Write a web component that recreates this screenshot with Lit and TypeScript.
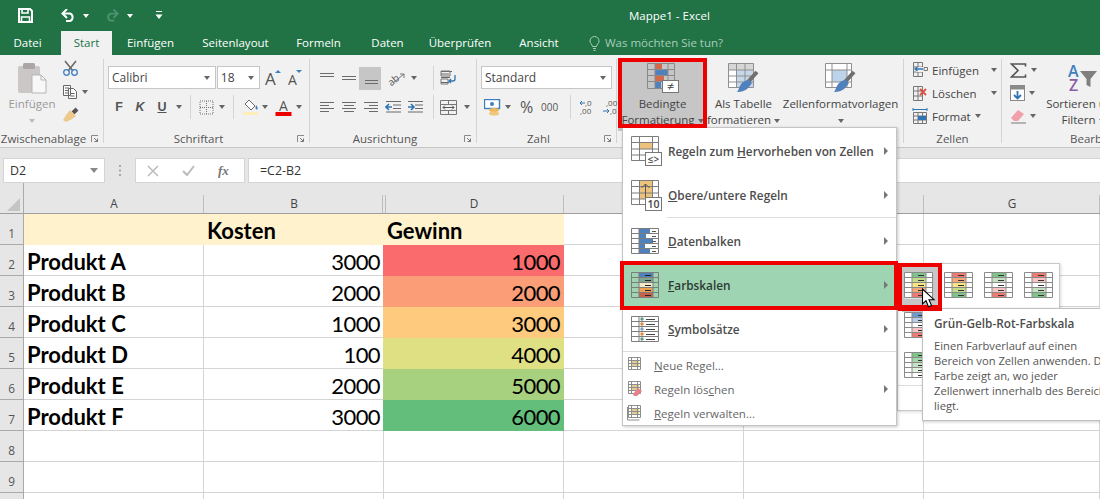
import { LitElement, html, css, svg } from "lit";
import { customElement } from "lit/decorators.js";

const GR = "#7d7d7d";
const gridD = (x: number, y: number, w: number, h: number, c: number[], r: number[]) =>
  `M${x} ${y}h${w}v${h}h${-w}z` + c.map((v) => `M${x + v} ${y}v${h}`).join("") + r.map((v) => `M${x} ${y + v}h${w}`).join("");
const grid = (x: number, y: number, w: number, h: number, c: number[], r: number[], s = GR) =>
  svg`<path d=${gridD(x, y, w, h, c, r)} fill="none" stroke=${s}/>`;
const box = (x: number, y: number, w: number, h: number, f: string) => svg`<rect x=${x} y=${y} width=${w} height=${h} fill=${f}/>`;
const line = (d: string, s = "#666", w = 1) => svg`<path d=${d} fill="none" stroke=${s} stroke-width=${w}/>`;

const scale = (cols: string[]) => html`<svg width="29" height="27" viewBox="0 0 29 27">
  ${box(0.5, 0.5, 28, 26, "#fff")}
  ${cols.map((c, i) => box(8, 1 + i * 5, 14, 5, c))}
  ${grid(0.5, 0.5, 28, 25, [7.5, 21.5], [5, 10, 15, 20], "#8a8a8a")}
  ${cols.map((_, i) => line(`M14 ${3.5 + i * 5}h6`, "#333"))}
</svg>`;

const iconRegeln = html`<svg width="31" height="30" viewBox="0 0 31 30">
  ${box(8, 6, 14, 7, "#edc27c")}
  ${grid(0.5, 0.5, 27, 24, [8, 21], [6, 12.5, 18.5])}
  ${box(14.5, 16.5, 16, 13, "#fff")}<rect x="14.5" y="16.5" width="16" height="13" fill="none" stroke="#777"/>
  <text x="22.5" y="26.5" text-anchor="middle" font-family="Open Sans" font-size="10" fill="#444">≤&gt;</text>
</svg>`;
const iconObere = html`<svg width="31" height="31" viewBox="0 0 31 31">
  ${box(9, 1, 13, 18, "#edc27c")}
  ${grid(0.5, 0.5, 27, 24, [8, 21], [6, 12.5, 18.5])}
  ${line("M14.5 17V4M10.5 8l4-4 4 4", "#555")}
  ${box(14.5, 17.5, 16, 13, "#fff")}<rect x="14.5" y="17.5" width="16" height="13" fill="none" stroke="#777"/>
  <text x="22.5" y="28" text-anchor="middle" font-family="Open Sans" font-size="10.5" fill="#444">10</text>
</svg>`;
const iconBalken = html`<svg width="29" height="27" viewBox="0 0 29 27">
  ${[11, 7, 14, 6, 11].map((w, i) => box(8, 1 + i * 5, w, 5, "#4f81bd"))}
  ${grid(0.5, 0.5, 27, 25, [7.5], [5, 10, 15, 20])}
  ${[0, 1, 2, 3, 4].map((i) => line(`M21 ${3.5 + i * 5}h4`, "#555"))}
</svg>`;
const iconSkalen = html`<svg width="29" height="27" viewBox="0 0 29 27">
  ${["#4f81bd", "#7fa692", "#f4e8c6", "#eda04f", "#c9604a"].map((c, i) => box(8, 1 + i * 5, 14, 5, c))}
  ${grid(0.5, 0.5, 27, 25, [7.5, 21.5], [5, 10, 15, 20])}
  ${[0, 1, 2, 3, 4].map((i) => line(`M14 ${3.5 + i * 5}h6`, "#222"))}
</svg>`;
const iconSymbol = html`<svg width="29" height="27" viewBox="0 0 29 27">
  ${grid(0.5, 0.5, 27, 25, [7.5], [5, 10, 15, 20])}
  ${["#5d9a8a", "#e28a3c", "#7fa0c0", "#e28a3c", "#5d9a8a"].map((c, i) => svg`<circle cx="11" cy=${3 + i * 5} r="1.7" fill=${c}/>`)}
  ${[0, 1, 2, 3, 4].map((i) => line(`M15 ${3.5 + i * 5}h9`, "#444"))}
</svg>`;
const smallGrid = (extra: unknown = null) => html`<svg width="16" height="16" viewBox="0 0 16 16">
  ${box(4, 3, 8, 6, "#e3cd8e")}
  ${grid(1.5, 0.5, 12, 12, [3, 9], [3, 6, 9], "#8d8d8d")}
  ${extra}
</svg>`;

const caret = html`<i class="caret"></i>`;
const launcher = html`<svg class="launch" width="8" height="8" viewBox="0 0 8 8">${line("M.5 7V.5H7", "#8a8a8a")}${line("M3 3l3.5 3.5M6.5 3.5v3h-3", "#777")}</svg>`;

const aLines = (ws: [number, number][], top: number, step: number) => html`<svg width="16" height="16" viewBox="0 0 16 16">
  ${ws.map((w, i) => line(`M${w[0]} ${top + i * step + 0.5}H${w[1]}`, "#6b6b6b"))}
</svg>`;
const indent = (dir: number) => html`<svg width="17" height="14" viewBox="0 0 17 14">
  ${[1, 4.5, 8, 11.5].map((y, i) => line(`M${i === 0 || i === 3 ? 1 : 8} ${y + 0.5}H16`, "#6b6b6b"))}
  ${line(dir < 0 ? "M7 7H1M4 4L1 7l3 3" : "M1 7H7M4 4l3 3-3 3", "#2f75b5", 1.6)}
</svg>`;
const brushOn = (body: unknown) => html`<svg width="32" height="30" viewBox="0 0 32 30">
  ${body}
  ${line("M20 19L29 9", "#6f6f6f", 4)}
  <path d="M21 17l3 3-3 4c-3 4-8 5-12 5 2-2 2-6 5-9 2-2 5-3 7-3z" fill="#4f81bd"/>
</svg>`;

const rows: [number, string, string, string, string][] = [
  [2, "Produkt A", "3000", "1000", "#f96b6c"],
  [3, "Produkt B", "2000", "2000", "#fb9d77"],
  [4, "Produkt C", "1000", "3000", "#fdca7e"],
  [5, "Produkt D", "100", "4000", "#dfe083"],
  [6, "Produkt E", "2000", "5000", "#a8d17f"],
  [7, "Produkt F", "3000", "6000", "#63be7b"],
];

@customElement("app-root")
export class AppRoot extends LitElement {
  static styles = css`
    :host { display: block; position: relative; width: 1100px; height: 499px; overflow: hidden; background: #fff;
      font-family: "Open Sans", "Noto Sans", sans-serif; font-size: 11.5px; color: #444; }
    svg { display: block; flex: none; }
    i.caret { display: inline-block; flex: none; width: 0; height: 0; border: 3.5px solid transparent; border-top: 4px solid #666; border-bottom: 0; vertical-align: middle; }
    .title { height: 31px; background: #217346; display: flex; align-items: center; color: #fff; }
    .qat { width: 629px; flex: none; display: grid; grid-template-columns: 18px 15px 28px 15px 7px 7px 15px 14px 8px 7px 21px 8px; align-items: center; justify-items: start; box-sizing: border-box; }
    .qat i.caret { border-top-color: #fff; }
    .qat .off { border-top-color: #5c9c7c; }
    .tabs { height: 24px; background: #217346; display: grid; grid-template-columns: 61px 51px 77px 93px 73px 65px 80px 78px 1fr; color: #fff; line-height: 24px; text-align: center; }
    .tab.first { padding-right: 6px; }
    .tab.on { background: #f1f1f1; color: #217346; }
    .tell { display: flex; align-items: center; gap: 5px; padding-left: 11px; color: #a9cdb9; }
    .ribbon { height: 93px; box-sizing: border-box; background: #f1f1f1; border-bottom: 1px solid #c6c6c6; display: flex; padding-top: 4px; }
    .g { flex: none; box-sizing: border-box; height: 84px; border-right: 1px solid #d4d4d4; }
    .body { height: 72px; display: flex; box-sizing: border-box; }
    .glabel { height: 16px; line-height: 16px; display: flex; align-items: center; color: #555; white-space: nowrap; }
    .glabel span { flex: 1; text-align: center; }
    .launch { margin: 0 4px 0 4px; }
    .big { display: flex; flex-direction: column; align-items: center; line-height: 16px; white-space: nowrap; flex: none; }
    .big .ic { height: 37px; display: flex; align-items: center; }
    .muted { color: #9a9a9a; }
    .muted i.caret { border-top-color: #bbb; }
    .small { display: flex; flex-direction: column; gap: 5.5px; }
    .srow { height: 18px; display: flex; align-items: center; gap: 4px; }

    .clip { width: 104px; }
    .clip .big { width: 62px; padding-left: 2px; box-sizing: border-box; }
    .font { width: 206px; }
    .stack { display: flex; flex-direction: column; padding: 7px 0 0 4px; gap: 6px; }
    .combos { display: flex; height: 23px; align-items: stretch; }
    .combo { box-sizing: border-box; height: 23px; background: #fff; border: 1px solid #c6c6c6; display: flex; align-items: center; justify-content: space-between; padding: 0 5px 0 3px; color: #444; font-size: 12px; }
    .combo.family { width: 110px; }
    .combo.size { width: 44px; margin-left: 1px; }
    .grow { width: 22px; margin-left: 5px; }
    .font-row { display: grid; height: 24px; align-items: center; grid-template-columns: 22px 20px 24px 10px 6px 1px 8px 15px 16px 3px 1px 9px 16px 12px 24px 8px; justify-items: center; }
    .f { font-weight: 700; font-size: 12.5px; color: #555; font-family: "Liberation Sans", sans-serif; }
    .vsep { width: 1px; height: 24px; background: #d4d4d4; }
    .align { width: 167px; }
    .al-row { display: grid; height: 23px; align-items: center; grid-template-columns: 22px 22px 22px 22px 22px 4px 1px 6px 20px 10px; justify-items: start; margin-left: 9px; }
    .al-row + .al-row { margin-top: 6px; height: 24px; }
    .al-row i.caret { margin-left: 4px; }
    .al-row > :nth-child(10) { margin-left: 0; }
    .hi { background: #c6c6c6; width: 22px; height: 23px; margin-left: -4px; display: flex; align-items: center; justify-content: center; }
    .al-stack { padding-top: 7px; }
    .zahl { width: 140px; }
    .zahl .combo { width: 131px; }
    .num-row { display: grid; height: 24px; align-items: center; grid-template-columns: 21px 15px 21px 21px 8px 1px 8px 23px 14px; justify-items: start; margin-left: 3px; }
    .pct { font-size: 16px; color: #555; }
    .th { font-size: 10px; color: #555; }
    .fmt { width: 287px; }
    .fmt .big:nth-child(1) { width: 89px; background: #c6c6c6; margin-left: 1px; }
    .fmt .big:nth-child(2) { width: 73px; }
    .fmt .big:nth-child(3) { width: 121px; }
    .cells { width: 98px; }
    .cells .small { padding-left: 8px; gap: 5px; margin-top: 2px; }
    .cells .srow { height: 18px; gap: 4px; }
    .ctext { width: 55px; }
    .edit { width: 110px; border-right: 0; }
    .edit .small { padding-left: 8px; width: 34px; gap: 5px; margin-top: 2px; flex: none; }
    .edit .big { width: 78px; margin-left: 0; }
    .edit .glabel { padding-left: 68px; }
    .band { height: 10px; background: #e6e6e6; }
    .fbar { height: 25px; background: #e6e6e6; display: flex; padding-left: 3px; color: #333; }
    .fbox { box-sizing: border-box; height: 25px; background: #fff; border: 1px solid #d4d4d4; display: flex; align-items: center; }
    .name { width: 102px; padding: 0 6px 0 6px; justify-content: space-between; font-size: 12.4px; }
    .name i.caret { border-width: 4px; border-top-width: 5px; border-bottom-width: 0; border-top-color: #888; }
    .dots { width: 30px; display: flex; align-items: center; justify-content: center; }
    .fx { width: 110px; padding: 0 12px 0 11px; justify-content: space-between; }
    .formula { flex: 1; margin-left: 3px; padding-left: 11px; font-size: 12.4px; border-right: 0; }
    .sheet { display: grid; grid-template-columns: 24px 180px 180px 180px 180px 180px 1fr; grid-auto-rows: 31px; }
    .hd { height: 31px; box-sizing: border-box; background-color: #e6e6e6; border-bottom: 1px solid #9e9e9e; color: #444; display: flex; align-items: flex-end; justify-content: center; padding-bottom: 1px; line-height: 18px; font-size: 11.8px;
      background-image: linear-gradient(#bdbdbd, #bdbdbd); background-repeat: no-repeat; background-position: right 0 bottom 0; background-size: 1px 18px; }
    .hd.corner { background-image: none; justify-content: flex-end; padding: 0 3px 2px 0; border-right: 1px solid #aaa; }
    .hd.b { background-position: right 1px bottom 0; }
    .hd.d { background-image: linear-gradient(#bdbdbd, #bdbdbd), linear-gradient(#bdbdbd, #bdbdbd); background-position: left 1px bottom 0, right 0 bottom 0; background-size: 1px 18px, 1px 18px; }
    .rh { box-sizing: border-box; background: #e6e6e6; border-right: 1px solid #aaa; border-bottom: 1px solid #aaa; display: flex; align-items: center; justify-content: center; padding-top: 7px; font-size: 11.8px; color: #555; }
    .c { box-sizing: border-box; border-right: 1px solid #d4d4d4; border-bottom: 1px solid #d4d4d4; font-family: Lato, "Liberation Sans", sans-serif; font-size: 22px; color: #000; line-height: 30px; padding: 2px 3px 0 3px; white-space: nowrap; }
    .c.bold { font-weight: 700; }
    .c.num { text-align: right; letter-spacing: -0.6px; }
    .c.y { background: #fff2cc; border-color: transparent; border-right: 0; border-bottom: 0; }
    .c.fill { margin-left: -1px; border: 0; padding-right: 4px; }
    .menu { position: absolute; left: 622px; top: 127px; box-sizing: border-box; width: 275px; height: 299px; background: #fff; border: 1px solid #c4c4c4; box-shadow: 1px 1px 3px rgba(0, 0, 0, .22); padding-top: 1px; color: #555; z-index: 3; font-size: 11.8px; }
    .mi { height: 44px; display: grid; grid-template-columns: 8px 37px 1fr 12px; align-items: center; font-weight: 600; color: #4d4d4d; }
    .mi > :first-child { grid-column: 2; }
    .mi.on { background: #9fd4b3; color: #2c3a33; }
    .arrow { width: 0; height: 0; border: 4px solid transparent; border-left: 4px solid #777; border-right: 0; }
    .sep { height: 1px; background: #dcdcdc; margin-bottom: 1px; }
    .sep.in { margin-left: 44px; }
    .ms { height: 24px; display: grid; grid-template-columns: 4px 27px 1fr 12px; align-items: center; color: #666; font-size: 11.5px; }
    .ms > :first-child { grid-column: 2; }
    .sub { position: absolute; left: 897px; top: 263px; box-sizing: border-box; width: 163px; height: 148px; background: #fff; border: 1px solid #c8c8c8; box-shadow: 1px 1px 3px rgba(0, 0, 0, .15); z-index: 2; }
    .sub .r { display: flex; gap: 11px; padding-left: 6px; height: 40px; padding-top: 8px; box-sizing: border-box; }
    .sub .sel { background: #c6c6c6; margin: -5px -6px -8px -2px; padding: 5px 6px 8px 2px; }
    .sub hr { border: 0; height: 1px; background: #dcdcdc; margin: 1px 0 0; }
    .ftip { position: absolute; left: 922px; top: 308px; box-sizing: border-box; width: 200px; height: 113px; background: #fff; border: 1px solid #c0c0c0; box-shadow: 1px 1px 3px rgba(0, 0, 0, .2); padding: 6px 0 0 11px; z-index: 4; line-height: 15px; color: #555; white-space: nowrap; font-size: 11.2px; }
    .ftip b { display: block; font-weight: 600; margin-bottom: 6px; line-height: 17px; color: #4d4d4d; font-size: 11.8px; }
    .mark { position: absolute; box-sizing: border-box; border: 4px solid #ee0000; z-index: 5; }
    .m1 { left: 618px; top: 58px; width: 89px; height: 70px; }
    .m2 { left: 620px; top: 261px; width: 278px; height: 49px; }
    .m3 { left: 898px; top: 263px; width: 44px; height: 48px; border-width: 4px 4px 6px 4px; }
    .cursor { position: absolute; left: 921px; top: 288px; z-index: 6; }
  `;

  render() {
    return html`
      <div class="title">
        <div class="qat">
          <span></span>
          <svg width="15" height="15" viewBox="0 0 15 15"><path d="M1 1h11l2 2v11H1z" fill="none" stroke="#fff" stroke-width="2"/><path d="M4 1v4h6V1M3.5 14V9h8v5" fill="none" stroke="#fff" stroke-width="1.6"/></svg>
          <span></span>
          <svg width="15" height="13" viewBox="0 0 15 13"><path d="M1.500 4.500H9a4 4 0 0 1 0 7.500H5" fill="none" stroke="#fff" stroke-width="2"/><path d="M6 0L1.500 4.500 6 9" fill="none" stroke="#fff" stroke-width="2"/></svg>
          <span></span>
          ${caret}
          <span></span>
          <svg width="14" height="13" viewBox="0 0 15 13"><path d="M13.500 4.500H6a4 4 0 0 0 0 7.500h4" fill="none" stroke="#4f9270" stroke-width="2"/><path d="M9 0l4.500 4.500L9 9" fill="none" stroke="#4f9270" stroke-width="2"/></svg>
          <span></span>
          <i class="caret off"></i>
          <span></span>
          <svg width="8" height="9" viewBox="0 0 8 9"><path d="M1 .5h6" stroke="#fff" fill="none"/><path d="M.5 3.500h7L4 8z" fill="#fff"/></svg>
        </div>
        <span>Mappe1 - Excel</span>
      </div>
      <div class="tabs">
        <div class="tab first">Datei</div><div class="tab on">Start</div><div class="tab">Einfügen</div><div class="tab">Seitenlayout</div><div class="tab">Formeln</div><div class="tab">Daten</div><div class="tab">Überprüfen</div><div class="tab">Ansicht</div>
        <div class="tell">
          <svg width="11" height="15" viewBox="0 0 11 15"><path d="M3.500 10.500C3 8 1 7.500 1 5a4.500 4.500 0 0 1 9 0c0 2.500-2 3-2.500 5.500zM4 12.500h3M4.500 14.500h2" fill="none" stroke="#a9cdb9"/></svg>
          <span>Was möchten Sie tun?</span>
        </div>
      </div>

      <div class="ribbon">
        <div class="g clip">
          <div class="body">
            <div class="big muted">
              <div class="ic"><svg width="31" height="32" viewBox="0 0 31 32"><rect x="1" y="4" width="22" height="27" rx="2" fill="#cbc7c7"/><rect x="6" y="1" width="12" height="6" rx="1.500" fill="#aaa6a6"/><path d="M15 13h9l5 5v13H15z" fill="#f8f8f8" stroke="#b5b5b5"/><path d="M24 13v5h5" fill="none" stroke="#b5b5b5"/></svg></div>
              <div>Einfügen</div>
              <div>${caret}</div>
            </div>
            <div class="small">
              <div class="srow"><svg width="17" height="16" viewBox="0 0 17 16"><path d="M3 1l8 10M14 1L6 11" stroke="#666" stroke-width="1.500" fill="none"/><circle cx="4.500" cy="12.500" r="2.800" fill="none" stroke="#3f7fbf" stroke-width="1.300"/><circle cx="12.500" cy="12.500" r="2.800" fill="none" stroke="#3f7fbf" stroke-width="1.300"/></svg></div>
              <div class="srow"><svg width="16" height="15" viewBox="0 0 16 15"><path d="M1.500 1.500h7v10h-7zM6.500 4.500h5l3 3v7h-8zM3 4h4M3 6.500h3M3 9h3M8.500 9.500h4M8.500 12h4" fill="#fbfbfb" stroke="#666"/></svg>${caret}</div>
              <div class="srow"><svg width="18" height="16" viewBox="0 0 18 16"><path d="M11 6l4-4" stroke="#555" stroke-width="4" fill="none"/><path d="M8 3l6 6-4 3-6 3-3-2 3-5z" fill="#ecc98c"/></svg></div>
            </div>
          </div>
          <div class="glabel"><span>Zwischenablage</span>${launcher}</div>
        </div>

        <div class="g font">
          <div class="body stack">
            <div class="combos">
              <div class="combo family"><span>Calibri</span>${caret}</div>
              <div class="combo size"><span>18</span>${caret}</div>
              <svg class="grow" width="22" height="23" viewBox="0 0 22 23"><text x="0" y="19" font-family="Open Sans" font-size="17" fill="#555">A</text><path d="M10 7l3-3 3 3z" fill="#3f7fbf"/></svg>
              <svg width="22" height="23" viewBox="0 0 22 23"><text x="1" y="19" font-family="Open Sans" font-size="14" fill="#555">A</text><path d="M9 4l3 3 3-3z" fill="#3f7fbf"/></svg>
            </div>
            <div class="font-row">
              <span class="f">F</span>
              <span class="f"><em>K</em></span>
              <span class="f"><u>U</u></span>
              ${caret}
              <span></span><span class="vsep"></span><span></span>
              <svg width="15" height="15" viewBox="0 0 15 15"><path d="M1 1h13v13H1zM7.500 1v13M1 7.500h13" fill="none" stroke="#777" stroke-dasharray="1 1"/></svg>
              ${caret}
              <span></span><span class="vsep"></span><span></span>
              <svg width="16" height="16" viewBox="0 0 16 16"><path d="M6 1l6 6-4 4-6-6z" fill="#fff" stroke="#666"/><path d="M13 6c1.500 2 2 3 1.500 4s-2 .5-2-1z" fill="#3f7fbf"/><rect x="0" y="13" width="15" height="3" fill="#fdeebc"/></svg>
              ${caret}
              <svg width="17" height="17" viewBox="0 0 17 17"><text x="8.500" y="12" text-anchor="middle" font-family="Open Sans" font-size="14" fill="#555">A</text><rect x="0.500" y="13" width="16" height="4" fill="#ee0000"/></svg>
              ${caret}
            </div>
          </div>
          <div class="glabel"><span>Schriftart</span>${launcher}</div>
        </div>

        <div class="g align">
          <div class="body">
            <div class="al-stack">
              <div class="al-row">
                ${aLines([[1, 15], [1, 15]], 3, 3)}
                ${aLines([[1, 15], [1, 15]], 6, 3)}
                <div class="hi">${aLines([[3, 16], [3, 16]], 10, 3)}</div>
                <svg width="22" height="16" viewBox="0 0 22 16"><text x="2" y="13" transform="rotate(-40 9 9)" font-family="Open Sans" font-size="10" fill="#555">ab</text><path d="M8 13l11-9M15 4h4v4" fill="none" stroke="#777"/></svg>
                ${caret}<span></span><span class="vsep"></span><span></span>
                <svg width="17" height="16" viewBox="0 0 17 16"><path d="M1 1.500h11M1 4h8M1 7.500h9M1 12.500h8" stroke="#666" fill="none"/><path d="M1 1h9v5H1zM1 9h7v5H1z" fill="none" stroke="#777"/><path d="M15 5v4a2 2 0 0 1-2 2H9M11 9l-2 2 2 2" fill="none" stroke="#2f75b5" stroke-width="1.300"/></svg>
              </div>
              <div class="al-row">
                ${aLines([[1, 15], [1, 10], [1, 15], [1, 10]], 3, 3)}
                ${aLines([[1, 15], [3, 13], [1, 15], [3, 13]], 3, 3)}
                ${aLines([[1, 15], [6, 15], [1, 15], [6, 15]], 3, 3)}
                ${indent(-1)}
                ${indent(1)}
                <span></span><span class="vsep"></span><span></span>
                <svg width="17" height="15" viewBox="0 0 17 15"><path d="M.5.500h16v14H.500zM.5 4.500h16M.5 10.500h16M8.500.5v4M8.500 10.500v4" fill="none" stroke="#777"/><path d="M3 7.500h11M5 5.500l-2 2 2 2M12 5.500l2 2-2 2" fill="none" stroke="#555"/></svg>
                ${caret}
              </div>
            </div>
          </div>
          <div class="glabel"><span>Ausrichtung</span>${launcher}</div>
        </div>

        <div class="g zahl">
          <div class="body stack">
            <div class="combo"><span>Standard</span>${caret}</div>
            <div class="num-row">
              <svg width="17" height="17" viewBox="0 0 17 17"><rect x="0.500" y="0.500" width="15" height="9" fill="#fff" stroke="#3f7fbf" stroke-width="1.400"/><circle cx="8" cy="5" r="2" fill="#3f7fbf"/><ellipse cx="10" cy="11" rx="5" ry="2" fill="#f0b85d"/><ellipse cx="10" cy="14.500" rx="5" ry="2" fill="#f0c67c"/></svg>
              ${caret}
              <span class="pct">%</span>
              <span class="th">000</span>
              <span></span><span class="vsep"></span><span></span>
              <svg width="16" height="16" viewBox="0 0 16 16"><text x="6" y="7" font-family="Open Sans" font-size="8" fill="#555">,0</text><text x="1" y="15" font-family="Open Sans" font-size="8" fill="#555">,00</text><path d="M6 4H1M3 2L1 4l2 2" stroke="#2f75b5" fill="none"/></svg>
              <svg width="16" height="16" viewBox="0 0 16 16"><text x="4" y="7" font-family="Open Sans" font-size="8" fill="#555">,00</text><text x="8" y="15" font-family="Open Sans" font-size="8" fill="#555">,0</text><path d="M1 12h6M5 10l2 2-2 2" stroke="#2f75b5" fill="none"/></svg>
            </div>
          </div>
          <div class="glabel"><span>Zahl</span>${launcher}</div>
        </div>

        <div class="g fmt">
          <div class="body">
            <div class="big">
              <div class="ic"><svg width="32" height="30" viewBox="0 0 32 30">
                ${box(8, 1, 7, 5, "#d1694a")}${box(8, 7, 13, 5, "#4f81bd")}${box(8, 13, 9, 5, "#d1694a")}${box(8, 19, 6, 6, "#4f81bd")}
                ${grid(0.5, 0.5, 27, 25, [7.5, 20.5], [6, 12, 18], "#8a8a8a")}
                ${box(15.5, 17.5, 16, 12, "#fff")}<rect x="15.500" y="17.500" width="16" height="12" fill="none" stroke="#777"/>
                <text x="23.500" y="28" text-anchor="middle" font-family="Open Sans" font-size="13" fill="#444">≠</text>
              </svg></div>
              <div>Bedingte</div>
              <div>Formatierung ${caret}</div>
            </div>
            <div class="big">
              <div class="ic">${brushOn(html`${box(1, 1, 24, 24, "#fff")}${box(1, 1, 24, 6, "#d6d6d6")}${box(8, 7, 17, 17, "#c7d7ea")}${grid(0.5, 0.5, 25, 24, [8, 16.500], [6.500, 12.500, 18.500], "#8f8f8f")}`)}</div>
              <div>Als Tabelle</div>
              <div>formatieren ${caret}</div>
            </div>
            <div class="big">
              <div class="ic">${brushOn(html`${box(1, 1, 26, 24, "#fff")}${box(7, 7, 15, 12, "#bcd3ea")}${grid(0.5, 0.5, 26, 24, [6.500, 21.500], [6.500, 18.500], "#8f8f8f")}`)}</div>
              <div>Zellenformatvorlagen</div>
              <div>${caret}</div>
            </div>
          </div>
          <div class="glabel"></div>
        </div>

        <div class="g cells">
          <div class="body">
            <div class="small">
              <div class="srow"><svg width="16" height="16" viewBox="0 0 16 16">${grid(1.500, 0.500, 9, 14, [4.500], [4.500, 9.500], "#777")}${box(4, 5, 12, 5, "#f1f1f1")}<path d="M12 5.500h3.500v3H12z" fill="none" stroke="#777"/><path d="M11 7H3M5.500 5L3 7l2.500 2" fill="none" stroke="#2f75b5" stroke-width="1.300"/></svg><span class="ctext">Einfügen</span>${caret}</div>
              <div class="srow"><svg width="16" height="16" viewBox="0 0 16 16">${grid(1.500, 1.500, 9, 14, [4.500], [4.500, 9.500], "#777")}<path d="M8 4l6 6M14 4l-6 6" stroke="#d9503f" stroke-width="1.800" fill="none"/></svg><span class="ctext">Löschen</span>${caret}</div>
              <div class="srow"><svg width="16" height="16" viewBox="0 0 16 16">${line("M1 1.500h14M1 0v3M15 0v3", "#2f75b5")}${grid(1.500, 4.500, 13, 11, [4.500, 9], [3.500, 7.500], "#777")}${box(6, 8, 8, 4, "#2f75b5")}</svg><span>Format</span>${caret}</div>
            </div>
          </div>
          <div class="glabel"><span>Zellen</span></div>
        </div>

        <div class="g edit">
          <div class="body">
            <div class="small">
              <div class="srow"><svg width="17" height="15" viewBox="0 0 17 15"><path d="M15.500 3.500V1H1.500l6.500 6.500L1.500 14h14v-2.500" fill="none" stroke="#555" stroke-width="1.600"/></svg>${caret}</div>
              <div class="srow"><svg width="15" height="16" viewBox="0 0 15 16"><rect x="0.500" y="0.500" width="14" height="15" fill="#fff" stroke="#888"/><rect x="0.500" y="0.500" width="14" height="4" fill="#8a8a8a"/><path d="M7.500 6v7M4 10l3.500 3.500L11 10" fill="none" stroke="#2f75b5" stroke-width="1.800"/></svg>${caret}</div>
              <div class="srow"><svg width="16" height="15" viewBox="0 0 16 15"><path d="M1 9l7-8 6 4-6 7H4z" fill="#f0a0a8"/>${line("M1 14h15", "#777")}</svg>${caret}</div>
            </div>
            <div class="big">
              <div class="ic"><svg width="30" height="30" viewBox="0 0 30 30"><text x="0" y="14" font-family="Open Sans" font-weight="600" font-size="16" fill="#3f7fbf">A</text><text x="1" y="28" font-family="Open Sans" font-weight="600" font-size="16" fill="#8b5ea8">Z</text><path d="M12 8h17l-6.500 8v8l-4-2v-6z" fill="#7f7f7f"/></svg></div>
              <div>Sortieren und</div>
              <div>Filtern ${caret}</div>
            </div>
          </div>
          <div class="glabel">Bearbeiten</div>
        </div>
      </div>

      <div class="band"></div>
      <div class="fbar">
        <div class="fbox name"><span>D2</span>${caret}</div>
        <div class="dots"><svg width="3" height="11" viewBox="0 0 3 11"><path d="M0 0h2v2H0zM0 4.500h2v2H0zM0 9h2v2H0z" fill="#a8a8a8"/></svg></div>
        <div class="fbox fx">
          <svg width="12" height="12" viewBox="0 0 12 12"><path d="M1 1l10 10M11 1L1 11" stroke="#bbb" stroke-width="1.500" fill="none"/></svg>
          <svg width="13" height="11" viewBox="0 0 13 11"><path d="M1 6l4 4 7-9" stroke="#bbb" stroke-width="2" fill="none"/></svg>
          <svg width="14" height="16" viewBox="0 0 14 16"><text x="0" y="12" font-family="Liberation Serif" font-style="italic" font-weight="700" font-size="13" fill="#777">fx</text></svg>
        </div>
        <div class="fbox formula">=C2-B2</div>
      </div>

      <div class="sheet">
        <div class="hd corner"><svg width="13" height="13" viewBox="0 0 13 13"><path d="M13 0v13H0z" fill="#c4c4c4"/></svg></div>
        <div class="hd">A</div><div class="hd b">B</div><div class="hd d">D</div><div class="hd"></div><div class="hd"></div><div class="hd">G</div>

        <div class="rh">1</div>
        <div class="c y"></div><div class="c y bold">Kosten</div><div class="c y bold">Gewinn</div><div class="c"></div><div class="c"></div><div class="c"></div>
        ${rows.map(
          (r) => html`<div class="rh">${r[0]}</div>
            <div class="c bold">${r[1]}</div>
            <div class="c num">${r[2]}</div>
            <div class="c num fill" style="background:${r[4]}">${r[3]}</div>
            <div class="c"></div><div class="c"></div><div class="c"></div>`
        )}
        ${[8, 9, 0].map(
          (n) => html`<div class="rh">${n || ""}</div><div class="c"></div><div class="c"></div><div class="c"></div><div class="c"></div><div class="c"></div><div class="c"></div>`
        )}
      </div>

      <div class="menu">
        <div class="mi"><div>${iconRegeln}</div><span>Regeln zum <u>H</u>ervorheben von Zellen</span><i class="arrow"></i></div>
        <div class="mi"><div>${iconObere}</div><span><u>O</u>bere/untere Regeln</span><i class="arrow"></i></div>
        <div class="sep in"></div>
        <div class="mi"><div>${iconBalken}</div><span><u>D</u>atenbalken</span><i class="arrow"></i></div>
        <div class="mi on"><div>${iconSkalen}</div><span><u>F</u>arbskalen</span><i class="arrow"></i></div>
        <div class="mi"><div>${iconSymbol}</div><span><u>S</u>ymbolsätze</span><i class="arrow"></i></div>
        <div class="sep"></div>
        <div class="ms"><div>${smallGrid()}</div><span><u>N</u>eue Regel...</span></div>
        <div class="ms"><div>${smallGrid(svg`<path d="M6 13l5-6 4 3-5 5H7z" fill="#e8808c"/>`)}</div><span>Regeln lös<u>c</u>hen</span><i class="arrow"></i></div>
        <div class="ms"><div>${smallGrid(line("M.5 2v13h12", "#8d8d8d"))}</div><span><u>R</u>egeln verwalten...</span></div>
      </div>

      <div class="sub">
        <div class="r">
          <div class="sel">${scale(["#7fc58a", "#c4dc88", "#fbe283", "#f8a877", "#ef7a72"])}</div>
          ${scale(["#ef7a72", "#f8a877", "#fbe283", "#c4dc88", "#7fc58a"])}
          ${scale(["#7fc58a", "#c5e3c4", "#ffffff", "#fbc4c4", "#ef7a72"])}
          ${scale(["#ef7a72", "#fbc4c4", "#ffffff", "#c5e3c4", "#7fc58a"])}
        </div>
        <div class="r">${scale(["#6f9ad0", "#b9cde8", "#ffffff", "#fbc4c4", "#ef7a72"])}</div>
        <div class="r">${scale(["#7fc58a", "#a5d6ac", "#c5e3c4", "#e2f1e2", "#ffffff"])}</div>
        <hr />
      </div>

      <div class="ftip">
        <b>Grün-Gelb-Rot-Farbskala</b>
        Einen Farbverlauf auf einen<br />
        Bereich von Zellen anwenden. Die<br />
        Farbe zeigt an, wo jeder<br />
        Zellenwert innerhalb des Bereichs<br />
        liegt.
      </div>

      <div class="mark m1"></div>
      <div class="mark m2"></div>
      <div class="mark m3"></div>
      <svg class="cursor" width="15" height="21" viewBox="0 0 15 21"><path d="M1.500 1v15l3.500-3.300 2.500 6 3-1.300-2.500-5.700h5z" fill="#fff" stroke="#000" stroke-width="1.100"/></svg>
    `;
  }
}
